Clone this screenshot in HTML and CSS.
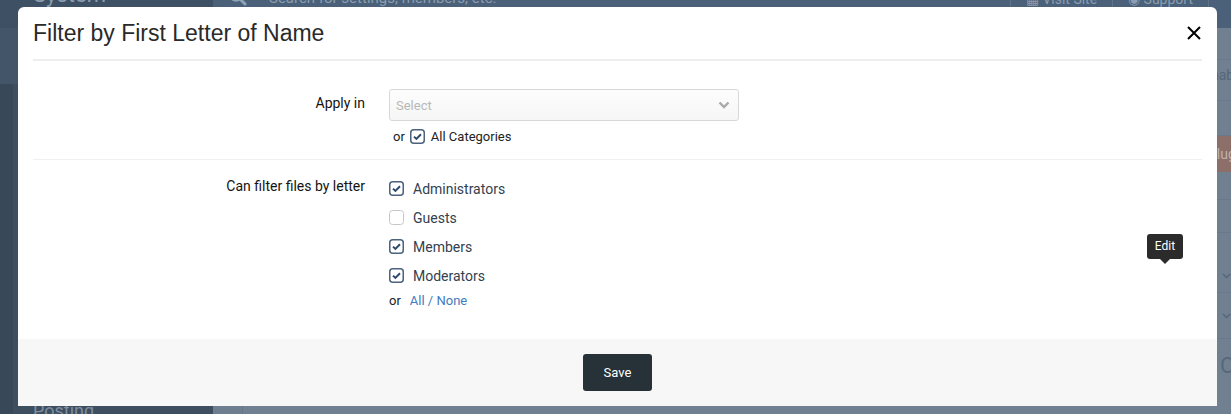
FILE: index.html
```html
<!DOCTYPE html>
<html lang="en">
<head>
    <meta charset="UTF-8">
    <meta name="viewport" content="width=device-width, initial-scale=1.0">
    <title>Filter by First Letter of Name</title>
    <link rel="stylesheet" href="styles.css">
</head>
<body>
    <div class="admin">
        <header class="admin-header">
            <div class="brand">System</div>
            <div class="search">
                <svg class="search-icon" width="18" height="18" viewBox="0 0 18 18" fill="none" stroke="currentColor">
                    <circle cx="7" cy="7" r="5.5" stroke-width="2.5"/>
                    <path d="M11 11L16 16" stroke-width="3" stroke-linecap="round"/>
                </svg>
                <span>Search for settings, members, etc.</span>
            </div>
            <nav class="header-links">
                <span class="header-link">&#9638; Visit Site</span>
                <span class="header-link">&#9673; Support</span>
                <span class="header-link header-link-end"></span>
            </nav>
        </header>

        <aside class="sidebar">
            <div class="side-active"></div>
            <div class="side-fill"></div>
            <div class="side-item">Posting</div>
        </aside>

        <main class="main">
            <div class="main-gutter"></div>
            <div class="main-body"></div>
            <div class="main-edge">
                <div class="edge-row edge-top"></div>
                <div class="edge-row edge-text">Enable</div>
                <div class="edge-row edge-blank"></div>
                <div class="edge-button">Plugins</div>
                <div class="edge-row edge-thin"></div>
                <div class="edge-row edge-mid"></div>
                <div class="edge-row edge-chev edge-chev-tall">
                    <svg width="9" height="6" viewBox="0 0 9 6" fill="none" stroke="currentColor"><path d="M1 1L4.5 4.5L8 1" stroke-width="1.5"/></svg>
                </div>
                <div class="edge-row edge-chev">
                    <svg width="9" height="6" viewBox="0 0 9 6" fill="none" stroke="currentColor"><path d="M1 1L4.5 4.5L8 1" stroke-width="1.5"/></svg>
                </div>
                <div class="edge-letter">C</div>
            </div>
        </main>
    </div>

    <div class="overlay">
        <div class="modal">
            <div class="modal-header">
                <h2 class="modal-title">Filter by First Letter of Name</h2>
                <svg class="modal-close" width="14" height="14" viewBox="0 0 14 14" fill="none" stroke="#000">
                    <path d="M1 1L13 13M13 1L1 13" stroke-width="2"/>
                </svg>
            </div>

            <div class="form-row form-row-first">
                <div class="form-label">Apply in</div>
                <div class="form-control">
                    <div class="select">
                        <span>Select</span>
                        <svg width="12" height="8" viewBox="0 0 12 8" fill="none" stroke="#a9a9a9">
                            <path d="M1.5 1.5L6 6L10.5 1.5" stroke-width="2.4"/>
                        </svg>
                    </div>
                    <div class="or-line or-line-inset">
                        <span>or</span>
                        <svg class="cb" width="15" height="15" viewBox="0 0 15 15">
                            <rect x="0.75" y="0.75" width="13.5" height="13.5" rx="3" fill="#fff" stroke="#4a627c" stroke-width="1.5"/>
                            <path d="M4 7.6L6.4 9.9L11 5.2" fill="none" stroke="#2d4b6c" stroke-width="2"/>
                        </svg>
                        <span class="or-label">All Categories</span>
                    </div>
                </div>
            </div>

            <div class="form-row form-row-second">
                <div class="form-label">Can filter files by letter</div>
                <div class="form-control">
                    <ul class="check-list">
                        <li>
                            <svg class="cb" width="15" height="15" viewBox="0 0 15 15">
                                <rect x="0.75" y="0.75" width="13.5" height="13.5" rx="3" fill="#fff" stroke="#4a627c" stroke-width="1.5"/>
                                <path d="M4 7.6L6.4 9.9L11 5.2" fill="none" stroke="#2d4b6c" stroke-width="2"/>
                            </svg>
                            Administrators
                        </li>
                        <li>
                            <svg class="cb" width="15" height="15" viewBox="0 0 15 15">
                                <rect x="0.5" y="0.5" width="14" height="14" rx="3" fill="#fff" stroke="#c6c6c6" stroke-width="1"/>
                            </svg>
                            Guests
                        </li>
                        <li>
                            <svg class="cb" width="15" height="15" viewBox="0 0 15 15">
                                <rect x="0.75" y="0.75" width="13.5" height="13.5" rx="3" fill="#fff" stroke="#4a627c" stroke-width="1.5"/>
                                <path d="M4 7.6L6.4 9.9L11 5.2" fill="none" stroke="#2d4b6c" stroke-width="2"/>
                            </svg>
                            Members
                        </li>
                        <li>
                            <svg class="cb" width="15" height="15" viewBox="0 0 15 15">
                                <rect x="0.75" y="0.75" width="13.5" height="13.5" rx="3" fill="#fff" stroke="#4a627c" stroke-width="1.5"/>
                                <path d="M4 7.6L6.4 9.9L11 5.2" fill="none" stroke="#2d4b6c" stroke-width="2"/>
                            </svg>
                            Moderators
                        </li>
                    </ul>
                    <div class="or-line or-line-wide">
                        <span>or</span>
                        <span class="link">All / None</span>
                    </div>
                </div>
            </div>

            <div class="modal-footer">
                <button class="btn-save">Save</button>
            </div>

            <div class="tooltip">Edit</div>
        </div>
    </div>
</body>
</html>
```

FILE: styles.css
```css
:root {
    --page-bg: #718090;
    --header-bg: #4a6179;
    --sidebar-bg: #3d4e60;
    --text: #141414;
    --text-soft: #33414f;
    --link: #3f7bbf;
    --line: #eeeeee;
    --btn-dark: #263238;
}

* {
    box-sizing: border-box;
}

body {
    margin: 0;
    height: 414px;
    overflow: hidden;
    font-family: Roboto, "Liberation Sans", sans-serif;
    background: var(--page-bg);
}

/* page behind the overlay */

.admin {
    display: grid;
    grid-template-columns: 213px 1fr;
    grid-template-rows: 28px 386px;
    height: 414px;
}

.admin-header {
    grid-column: 1 / -1;
    display: flex;
    background: var(--header-bg);
    color: #8b9db0;
}

.brand {
    width: 213px;
    padding-left: 33px;
    background: #3e5064;
    font-size: 22px;
    line-height: 20px;
    margin-top: -15px;
    height: 43px;
}

.search {
    flex: 1;
    display: flex;
    align-items: flex-start;
    gap: 22px;
    padding-left: 16px;
    font-size: 15px;
    line-height: 10px;
    margin-top: -7px;
}

.search-icon {
    margin-top: -5px;
    color: #8fa2b6;
}

.header-links {
    display: flex;
    font-size: 14px;
    line-height: 10px;
    margin-top: -6px;
}

.header-link {
    padding: 0 15px;
    border-left: 1px solid #5e7389;
    height: 34px;
}

.header-link-end {
    padding: 0 11px;
}

.sidebar {
    display: flex;
    flex-direction: column;
    background: var(--sidebar-bg);
    border-left: 13px solid #394859;
}

.side-active {
    height: 56px;
    background: #435568;
    margin-left: -13px;
}

.side-fill {
    flex: 1;
}

.side-item {
    height: 16px;
    padding-left: 20px;
    color: #7d8d9e;
    font-size: 18px;
    line-height: 26px;
}

.main {
    display: grid;
    grid-template-columns: 30px 1fr 41px;
}

.main-gutter {
    background: #6f7e8e;
    border-right: 1px solid #66768a;
}

.main-edge {
    display: flex;
    flex-direction: column;
    color: #4f5f70;
    font-size: 14px;
}

.edge-row {
    border-bottom: 1px solid #67788b;
}

.edge-top {
    height: 32px;
}

.edge-text {
    height: 41px;
    padding-left: 13px;
    line-height: 30px;
    color: #55677a;
}

.edge-blank {
    height: 35px;
}

.edge-button {
    height: 36px;
    padding-left: 18px;
    background: #8c6f69;
    color: #c2b1ac;
    line-height: 36px;
}

.edge-thin {
    height: 28px;
}

.edge-mid {
    height: 33px;
}

.edge-chev {
    height: 46px;
    display: flex;
    align-items: center;
    padding-left: 32px;
    color: #55667a;
}

.edge-chev-tall {
    height: 60px;
    padding-top: 26px;
}

.edge-letter {
    padding-left: 30px;
    padding-top: 14px;
    font-size: 22px;
    color: #56677a;
}

/* modal */

.overlay {
    position: fixed;
    top: 0;
    left: 0;
    right: 0;
    bottom: 0;
    padding: 7px 0 0 18px;
}

.modal {
    position: relative;
    width: 1199px;
    background: #fff;
    border-radius: 6px 6px 0 0;
}

.modal-header {
    display: flex;
    justify-content: space-between;
    align-items: center;
    margin: 0 15px;
    padding: 12px 0;
    border-bottom: 2px solid var(--line);
}

.modal-title {
    margin: 0;
    font-family: "Liberation Sans", Arial, sans-serif;
    font-size: 23px;
    font-weight: normal;
    line-height: 28px;
    color: #2a2a2a;
}

.modal-close {
    margin-right: 1px;
}

.form-row {
    display: grid;
    grid-template-columns: 332px 1fr;
    column-gap: 24px;
    margin: 0 15px;
}

.form-row + .form-row {
    border-top: 1px solid #f0f0f0;
}

.form-row-first {
    padding: 28px 0 13px;
}

.form-row-second {
    padding: 14px 0 28px;
}

.form-label {
    text-align: right;
    font-size: 14px;
    line-height: 20px;
    color: var(--text);
}

.form-row-first .form-label {
    padding-top: 4px;
}

.form-row-second .form-label {
    padding-top: 2px;
}

.select {
    display: flex;
    justify-content: space-between;
    align-items: center;
    width: 350px;
    height: 32px;
    padding: 0 8px 0 6px;
    border: 1px solid #d8d8d8;
    border-radius: 3px;
    background: linear-gradient(#fdfdfd, #f6f6f6);
    color: #b8b8b8;
    font-size: 13px;
}

.or-line {
    display: flex;
    align-items: center;
    height: 20px;
    font-size: 13px;
    color: #222;
}

.or-line-inset {
    margin-top: 5px;
    padding-left: 4px;
    gap: 5px;
}

.or-line-inset .or-label {
    margin-left: 1px;
}

.or-line-wide {
    height: 21px;
    gap: 9px;
}

.cb {
    flex: none;
    display: block;
}

.check-list {
    list-style: none;
    margin: 0;
    padding: 0;
}

.check-list li {
    display: flex;
    align-items: center;
    gap: 9px;
    height: 29px;
    font-size: 14px;
    color: var(--text-soft);
}

.link {
    color: var(--link);
}

.modal-footer {
    display: flex;
    justify-content: center;
    padding: 15px 0;
    background: #f7f7f7;
}

.btn-save {
    width: 69px;
    height: 37px;
    border: none;
    border-radius: 3px;
    background: var(--btn-dark);
    color: #fff;
    font-family: Roboto, "Liberation Sans", sans-serif;
    font-size: 13px;
}

.tooltip {
    position: absolute;
    left: 1129px;
    top: 227px;
    width: 36px;
    height: 25px;
    border-radius: 3px;
    background: #2b2b2b;
    color: #fff;
    font-size: 12px;
    line-height: 25px;
    text-align: center;
}

.tooltip::after {
    content: '';
    position: absolute;
    left: 13px;
    top: 25px;
    border: 5px solid transparent;
    border-top-color: #2b2b2b;
}
```
